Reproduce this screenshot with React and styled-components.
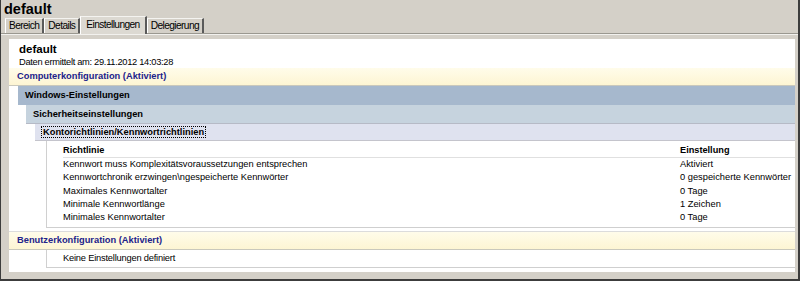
import styled, { createGlobalStyle } from 'styled-components'

const GlobalStyle = createGlobalStyle`
  html, body {
    margin: 0;
    padding: 0;
    background: #d4d0c8;
  }
  body {
    font-family: "Liberation Sans", Arial, sans-serif;
    color: #000;
  }
`

const Frame = styled.div`
  width: 800px;
  height: 281px;
  box-sizing: border-box;
  border-left: 1px solid #3c3c3c;
  border-right: 2px solid #3c3c3c;
  border-bottom: 2px solid #3c3c3c;
  display: flex;
  flex-direction: column;
  background: #d4d0c8;
  overflow: hidden;
`

const WindowTitle = styled.div`
  font-weight: bold;
  font-size: 14.5px;
  height: 16px;
  line-height: 16px;
  padding-left: 3px;
  padding-top: 1px;
`

const TabStrip = styled.div`
  display: flex;
  align-items: flex-end;
  height: 16px;
  padding-left: 4px;
  border-bottom: 1px solid #9a9890;
  box-shadow: 0 1px 0 #f2f1ee;
`

const Tab = styled.div`
  font-size: 10.2px;
  letter-spacing: -0.6px;
  height: ${p => (p.$active ? '18px' : '15px')};
  line-height: ${p => (p.$active ? '16px' : '14px')};
  padding: 0 ${p => (p.$active ? '5px' : '3px')};
  box-sizing: border-box;
  background: ${p => (p.$active ? '#dcd9d2' : '#d4d0c8')};
  border-left: 1px solid #fff;
  border-top: 1px solid #f4f3f0;
  border-right: 2px solid #5a5a5a;
  margin-bottom: ${p => (p.$active ? '-1px' : '0')};
`

const Panel = styled.div`
  flex: 1;
  margin: 5px 3px 7px 8px;
  background: #fff;
  display: flex;
  flex-direction: column;
`

const Header = styled.div`
  padding: 3px 10px 0;
`

const HeaderTitle = styled.div`
  font-weight: bold;
  font-size: 11.5px;
  line-height: 14px;
`

const HeaderDate = styled.div`
  font-size: 9.3px;
  letter-spacing: -0.3px;
  line-height: 12px;
`

const ConfigBar = styled.div`
  height: 17px;
  line-height: 17px;
  padding-left: 8px;
  background: linear-gradient(#fffcea, #fdf5d3);
  color: #22228a;
  font-weight: bold;
  font-size: 9.3px;
  border-top: ${p => (p.$topLine ? '1px solid #dcdcdc' : 'none')};
  border-bottom: 1px solid #c9c8bc;
`

const LevelBar = styled.div`
  height: ${p => p.$h}px;
  line-height: ${p => p.$h}px;
  padding-left: 7px;
  background: ${p => p.$bg};
  font-weight: bold;
  font-size: 9.3px;
  border-bottom: 1px solid ${p => p.$line};
`

const Indent = styled.div`
  margin-left: ${p => p.$by}px;
`

const FocusText = styled.span`
  outline: 1px dotted #000;
  outline-offset: 0;
  padding: 0 1px;
`

const Table = styled.div`
  border-left: 1px solid #d0d0d0;
  border-bottom: 1px solid #cfcfcf;
  padding: 3px 0 3px 16px;
  display: grid;
  grid-template-columns: 617px 1fr;
  font-size: 9.3px;
`

const HeadCell = styled.div`
  font-weight: bold;
  font-size: 9.2px;
  height: 13px;
  line-height: 13px;
  border-bottom: 1px solid #e0e0e0;
`

const Cell = styled.div`
  height: 13.3px;
  line-height: 13.3px;
  white-space: nowrap;
`

const Gap = styled.div`
  height: 3px;
`

const EmptyBox = styled.div`
  margin-left: 37px;
  border-left: 1px solid #d0d0d0;
  border-bottom: 1px solid #cfcfcf;
  height: 17px;
  line-height: 17px;
  padding-left: 16px;
  font-size: 9.3px;
  letter-spacing: -0.2px;
`

const rows = [
  ['Kennwort muss Komplexitätsvoraussetzungen entsprechen', 'Aktiviert'],
  ['Kennwortchronik erzwingen\\ngespeicherte Kennwörter', '0 gespeicherte Kennwörter'],
  ['Maximales Kennwortalter', '0 Tage'],
  ['Minimale Kennwortlänge', '1 Zeichen'],
  ['Minimales Kennwortalter', '0 Tage'],
]

const App = () => {
  return (
    <>
      <GlobalStyle />
      <Frame>
        <WindowTitle>default</WindowTitle>
        <TabStrip>
          <Tab>Bereich</Tab>
          <Tab>Details</Tab>
          <Tab $active>Einstellungen</Tab>
          <Tab>Delegierung</Tab>
        </TabStrip>
        <Panel>
          <Header>
            <HeaderTitle>default</HeaderTitle>
            <HeaderDate>Daten ermittelt am: 29.11.2012 14:03:28</HeaderDate>
          </Header>
          <ConfigBar>Computerkonfiguration (Aktiviert)</ConfigBar>
          <Indent $by={9}>
            <LevelBar $h={18} $bg="#a6b8cd" $line="#a6b8cd">Windows-Einstellungen</LevelBar>
            <Indent $by={8}>
              <LevelBar $h={18} $bg="#c6d3de" $line="#b6bac6">Sicherheitseinstellungen</LevelBar>
              <Indent $by={9}>
                <LevelBar $h={16} $bg="#dfe2ef" $line="#c4c4cc">
                  <FocusText>Kontorichtlinien/Kennwortrichtlinien</FocusText>
                </LevelBar>
                <Indent $by={11}>
                  <Table>
                    <HeadCell>Richtlinie</HeadCell>
                    <HeadCell>Einstellung</HeadCell>
                    {rows.map(([name, value]) => (
                      <>
                        <Cell key={name}>{name}</Cell>
                        <Cell key={name + 'v'}>{value}</Cell>
                      </>
                    ))}
                  </Table>
                </Indent>
              </Indent>
            </Indent>
          </Indent>
          <Gap />
          <ConfigBar $topLine>Benutzerkonfiguration (Aktiviert)</ConfigBar>
          <EmptyBox>Keine Einstellungen definiert</EmptyBox>
        </Panel>
      </Frame>
    </>
  )
}

export default App
